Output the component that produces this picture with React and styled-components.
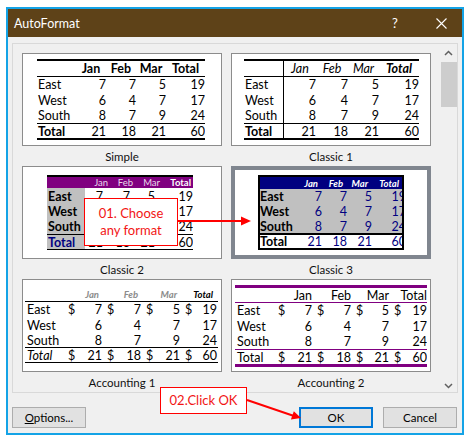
import React from "react";
import styled, { createGlobalStyle } from "styled-components";

const Global = createGlobalStyle`
  html, body { margin: 0; padding: 0; background: #ffffff; }
  body { font-family: Lato, "Noto Sans", sans-serif; }
  #root { width: 471px; height: 447px; }
`;

const Page = styled.div`
  position: relative;
  width: 471px;
  height: 447px;
  padding: 7px 0 0 6px;
  box-sizing: border-box;
`;

const Dialog = styled.div`
  width: 458px;
  height: 428px;
  box-sizing: border-box;
  border: 2px solid #14a3e6;
  background: #f0f0f0;
  display: flex;
  flex-direction: column;
`;

const TitleBar = styled.div`
  height: 28px;
  flex: 0 0 28px;
  background: #5e4218;
  color: #ffffff;
  display: flex;
  align-items: center;
  padding: 0 6px 0 6px;
  font-size: 12.5px;
`;

const Title = styled.span`
  flex: 1;
`;

const TitleButton = styled.span`
  width: 30px;
  height: 28px;
  display: flex;
  align-items: center;
  justify-content: center;
  font-size: 13px;
  margin-left: ${(p) => p.$gap || 0}px;
`;

const Body = styled.div`
  flex: 1;
  display: flex;
  flex-direction: column;
  padding: 6px 4px 0 4px;
`;

const ListBox = styled.div`
  width: 446px;
  height: 350px;
  box-sizing: border-box;
  border: 1px solid #d9d9d9;
  background: #f0f0f0;
  display: flex;
`;

const ListContent = styled.div`
  flex: 1;
  overflow: hidden;
  padding: 9px 0 0 9px;
  display: grid;
  grid-template-columns: 200px 200px;
  column-gap: 9px;
  align-content: start;
`;

const ScrollBar = styled.div`
  width: 17px;
  flex: 0 0 17px;
  display: flex;
  flex-direction: column;
`;

const ScrollArrow = styled.div`
  height: 17px;
  display: flex;
  justify-content: center;
  align-items: ${(p) => (p.$down ? "flex-end" : "center")};
  padding-bottom: ${(p) => (p.$down ? 3 : 0)}px;
  box-sizing: border-box;
`;

const ScrollThumb = styled.div`
  margin: 1px 0 0 1px;
  width: 16px;
  height: 45px;
  background: #cdcdcd;
`;

const ScrollSpace = styled.div`
  flex: 1;
`;

const Item = styled.div`
  display: flex;
  flex-direction: column;
`;

const Card = styled.div`
  width: 200px;
  height: 93px;
  box-sizing: border-box;
  background: #ffffff;
  border: ${(p) => (p.$selected ? "4px solid #80868f" : "1px solid #8c8c8c")};
  padding: ${(p) => p.$pt}px 0 0 ${(p) => p.$pl}px;
  overflow: hidden;
`;

const Caption = styled.div`
  height: 20px;
  box-sizing: border-box;
  padding-top: 2px;
  line-height: 18px;
  text-align: center;
  font-size: 11.5px;
  color: #111111;
`;

const Tbl = styled.div`
  width: ${(p) => p.$w}px;
  overflow: hidden;
  font-size: 12.5px;
  color: #000000;
  border: ${(p) => (p.$frame ? "2px solid #000" : "none")};
`;

const Row = styled.div`
  display: flex;
  height: ${(p) => p.$h}px;
  background: ${(p) => p.$bg || "transparent"};
  border-top: ${(p) => p.$bt || "none"};
  border-bottom: ${(p) => p.$bb || "none"};
`;

const justify = { left: "flex-start", right: "flex-end", center: "center", between: "space-between" };

const Cell = styled.div`
  flex: 0 0 ${(p) => p.$w}px;
  box-sizing: border-box;
  display: flex;
  align-items: center;
  justify-content: ${(p) => justify[p.$align || "left"]};
  padding: 0 ${(p) => p.$pr || 0}px 0 ${(p) => p.$pl || 0}px;
  font-weight: ${(p) => (p.$bold ? 700 : 400)};
  font-style: ${(p) => (p.$italic ? "italic" : "normal")};
  color: ${(p) => p.$color || "inherit"};
  font-size: ${(p) => (p.$size ? `${p.$size}px` : "inherit")};
  background: ${(p) => p.$bg || "transparent"};
  border-right: ${(p) => p.$br || "none"};
  white-space: nowrap;
`;

const ButtonRow = styled.div`
  margin-top: 14px;
  display: flex;
  justify-content: space-between;
  padding-right: 1px;
`;

const ButtonGroup = styled.div`
  display: flex;
  gap: 10px;
`;

const Button = styled.button`
  width: 74px;
  height: 21px;
  box-sizing: border-box;
  background: #e1e1e1;
  border: ${(p) => (p.$primary ? "2px solid #0078d7" : "1px solid #adadad")};
  font-family: Lato, "Noto Sans", sans-serif;
  font-size: 11.5px;
  color: #000000;
  padding: 0;
  border-radius: 0;
`;

const Underlined = styled.span`
  text-decoration: underline;
`;

const Callout = styled.div`
  position: absolute;
  left: ${(p) => p.$x}px;
  top: ${(p) => p.$y}px;
  width: ${(p) => p.$w}px;
  height: ${(p) => p.$h}px;
  box-sizing: border-box;
  background: #ffffff;
  border: 1px solid #ff0000;
  color: #f21515;
  font-size: 13px;
  line-height: 17px;
  display: flex;
  flex-direction: column;
  align-items: center;
  justify-content: center;
  text-align: center;
`;

const ArrowLayer = styled.svg`
  position: absolute;
  left: 0;
  top: 0;
  pointer-events: none;
`;

const labels = ["East", "West", "South", "Total"];
const data = [
  [7, 7, 5, 19],
  [6, 4, 7, 17],
  [8, 7, 9, 24],
  [21, 18, 21, 60],
];
const heads = ["Jan", "Feb", "Mar", "Total"];

function SimpleTable() {
  const cols = [39, 30, 30, 30, 39];
  const hs = [15, 16, 15, 14];
  return (
    <Tbl $w={168}>
      <Row $h={15} $bt="2px solid #000" $bb="1px solid #000">
        <Cell $w={cols[0]} />
        {heads.map((h, i) => (
          <Cell key={h} $w={cols[i + 1]} $align="center" $bold>
            {h}
          </Cell>
        ))}
      </Row>
      {labels.map((l, r) => (
        <Row
          key={l}
          $h={hs[r]}
          $bt={r === 3 ? "1px solid #000" : undefined}
          $bb={r === 3 ? "2px solid #000" : undefined}
        >
          <Cell $w={cols[0]} $pl={1} $bold={r === 3}>
            {l}
          </Cell>
          {data[r].map((v, i) => (
            <Cell key={i} $w={cols[i + 1]} $align="right">
              {v}
            </Cell>
          ))}
        </Row>
      ))}
    </Tbl>
  );
}

function ClassicOneTable() {
  const cols = [40, 32, 32, 31, 40];
  const hs = [15, 16, 15, 14];
  return (
    <Tbl $w={175}>
      <Row $h={15} $bt="2px solid #000" $bb="1px solid #000">
        <Cell $w={cols[0]} $br="1px solid #000" />
        {heads.map((h, i) => (
          <Cell key={h} $w={cols[i + 1]} $align="center" $italic $bold={i === 3}>
            {h}
          </Cell>
        ))}
      </Row>
      {labels.map((l, r) => (
        <Row
          key={l}
          $h={hs[r]}
          $bt={r === 3 ? "1px solid #000" : undefined}
          $bb={r === 3 ? "2px solid #000" : undefined}
        >
          <Cell $w={cols[0]} $pl={1} $bold={r === 3} $br="1px solid #000">
            {l}
          </Cell>
          {data[r].map((v, i) => (
            <Cell key={i} $w={cols[i + 1]} $align="right">
              {v}
            </Cell>
          ))}
        </Row>
      ))}
    </Tbl>
  );
}

function ClassicTwoTable() {
  const headCols = [38, 25, 25, 27, 31];
  const cols = [38, 18, 27, 25, 38];
  const hs = [16, 15, 15, 14];
  return (
    <Tbl $w={146}>
      <Row $h={11} $bt="2px solid #000" $bg="#800080">
        <Cell $w={headCols[0]} />
        {heads.map((h, i) => (
          <Cell
            key={h}
            $w={headCols[i + 1]}
            $align="right"
            $pr={2}
            $size={9.5}
            $color={i === 3 ? "#ffffff" : "#ead8ea"}
            $bold={i === 3}
          >
            {h}
          </Cell>
        ))}
      </Row>
      {labels.map((l, r) => (
        <Row
          key={l}
          $h={hs[r]}
          $bt={r === 3 ? "1px solid #000" : undefined}
          $bb={r === 3 ? "1px solid #000" : undefined}
        >
          <Cell $w={cols[0]} $pl={1} $bold $bg="#c0c0c0" $color={r === 3 ? "#000080" : "#000"}>
            {l}
          </Cell>
          {data[r].map((v, i) => (
            <Cell key={i} $w={cols[i + 1]} $align="right">
              {v}
            </Cell>
          ))}
        </Row>
      ))}
    </Tbl>
  );
}

function ClassicThreeTable() {
  const cols = [37, 25, 25, 25, 34];
  const hs = [15, 15, 14, 13];
  return (
    <Tbl $w={142} $frame>
      <Row $h={12} $bg="#000080">
        <Cell $w={cols[0]} />
        {heads.map((h, i) => (
          <Cell
            key={h}
            $w={cols[i + 1]}
            $align="right"
            $pr={i === 3 ? 7 : 4}
            $size={9.5}
            $color="#ffffff"
            $bold
            $italic
          >
            {h}
          </Cell>
        ))}
      </Row>
      {labels.map((l, r) => (
        <Row
          key={l}
          $h={hs[r]}
          $bg={r === 3 ? "#ffffff" : "#c0c0c0"}
          $bt={r === 3 ? "2px solid #000" : undefined}
        >
          <Cell $w={cols[0]} $bold>
            {l}
          </Cell>
          {data[r].map((v, i) => (
            <Cell key={i} $w={cols[i + 1]} $align="right" $color="#000080">
              {v}
            </Cell>
          ))}
        </Row>
      ))}
    </Tbl>
  );
}

function AccountingOneTable() {
  const cols = [40, 39, 39, 39, 36];
  const hs = [15, 16, 14, 14];
  return (
    <Tbl $w={193}>
      <Row $h={14} $bb="1px solid #000">
        <Cell $w={cols[0]} />
        {heads.map((h, i) => (
          <Cell
            key={h}
            $w={cols[i + 1]}
            $align="right"
            $pr={5}
            $size={9.5}
            $italic
            $bold
            $color={i === 3 ? "#000" : "#8c8c8c"}
          >
            {h}
          </Cell>
        ))}
      </Row>
      {labels.map((l, r) => (
        <Row
          key={l}
          $h={hs[r]}
          $bt={r === 3 ? "1px solid #000" : undefined}
          $bb={r === 3 ? "1px solid #000" : undefined}
        >
          <Cell $w={cols[0]} $pl={2} $italic={r === 3}>
            {l}
          </Cell>
          {data[r].map((v, i) => {
            const money = r === 0 || r === 3;
            return (
              <Cell key={i} $w={cols[i + 1]} $align={money ? "between" : "right"} $pl={3} $pr={i === 3 ? 1 : 2}>
                {money && <span>$</span>}
                <span>{v}</span>
              </Cell>
            );
          })}
        </Row>
      ))}
    </Tbl>
  );
}

function AccountingTwoTable() {
  const cols = [40, 39, 39, 38, 36];
  const hs = [15, 16, 15, 14];
  const purple = "#800080";
  return (
    <Tbl $w={192}>
      <Row $h={14} $bt={`3px solid ${purple}`} $bb={`1px solid ${purple}`}>
        <Cell $w={cols[0]} />
        {heads.map((h, i) => (
          <Cell key={h} $w={cols[i + 1]} $align="right" $pr={i === 3 ? 0 : 2}>
            {h}
          </Cell>
        ))}
      </Row>
      {labels.map((l, r) => (
        <Row
          key={l}
          $h={hs[r]}
          $bt={r === 3 ? `1px solid ${purple}` : undefined}
          $bb={r === 3 ? `3px solid ${purple}` : undefined}
        >
          <Cell $w={cols[0]} $pl={2}>
            {l}
          </Cell>
          {data[r].map((v, i) => {
            const money = r === 0 || r === 3;
            return (
              <Cell key={i} $w={cols[i + 1]} $align={money ? "between" : "right"} $pl={3} $pr={i === 3 ? 0 : 2}>
                {money && <span>$</span>}
                <span>{v}</span>
              </Cell>
            );
          })}
        </Row>
      ))}
    </Tbl>
  );
}

const formats = [
  { name: "Simple", pt: 5, pl: 14, Table: SimpleTable },
  { name: "Classic 1", pt: 5, pl: 12, Table: ClassicOneTable },
  { name: "Classic 2", pt: 8, pl: 24, Table: ClassicTwoTable },
  { name: "Classic 3", pt: 5, pl: 23, Table: ClassicThreeTable, selected: true },
  { name: "Accounting 1", pt: 7, pl: 2, Table: AccountingOneTable },
  { name: "Accounting 2", pt: 5, pl: 3, Table: AccountingTwoTable },
];

function Chevron({ down }) {
  return (
    <svg width="9" height="6" viewBox="0 0 9 6">
      <polyline
        points={down ? "1,1 4.5,4.5 8,1" : "1,5 4.5,1.5 8,5"}
        fill="none"
        stroke="#606060"
        strokeWidth="1.5"
      />
    </svg>
  );
}

export default function App() {
  return (
    <Page>
      <Global />
      <Dialog>
        <TitleBar>
          <Title>AutoFormat</Title>
          <TitleButton>?</TitleButton>
          <TitleButton $gap={16}>
            <svg width="11" height="11" viewBox="0 0 11 11">
              <path d="M0.5 0.5 L10.5 10.5 M10.5 0.5 L0.5 10.5" stroke="#ffffff" strokeWidth="1.1" />
            </svg>
          </TitleButton>
        </TitleBar>
        <Body>
          <ListBox>
            <ListContent>
              {formats.map(({ name, pt, pl, Table, selected }) => (
                <Item key={name}>
                  <Card $pt={pt} $pl={pl} $selected={selected}>
                    <Table />
                  </Card>
                  <Caption>{name}</Caption>
                </Item>
              ))}
            </ListContent>
            <ScrollBar>
              <ScrollArrow>
                <Chevron />
              </ScrollArrow>
              <ScrollThumb />
              <ScrollSpace />
              <ScrollArrow $down>
                <Chevron down />
              </ScrollArrow>
            </ScrollBar>
          </ListBox>
          <ButtonRow>
            <Button>
              <Underlined>O</Underlined>ptions...
            </Button>
            <ButtonGroup>
              <Button $primary>OK</Button>
              <Button>Cancel</Button>
            </ButtonGroup>
          </ButtonRow>
        </Body>
      </Dialog>
      <Callout $x={84} $y={198} $w={94} $h={48}>
        <span>01. Choose</span>
        <span>any format</span>
      </Callout>
      <Callout $x={160} $y={387} $w={87} $h={27}>
        02.Click OK
      </Callout>
      <ArrowLayer width="471" height="447" viewBox="0 0 471 447">
        <line x1="178" y1="221" x2="243" y2="221" stroke="#ff0000" strokeWidth="2" />
        <polygon points="251,221 241,216.5 241,225.5" fill="#ff0000" />
        <line x1="247" y1="400" x2="294" y2="416" stroke="#ff0000" strokeWidth="2" />
        <polygon points="301,418 293.8,411.2 290.9,419.5" fill="#ff0000" />
      </ArrowLayer>
    </Page>
  );
}
